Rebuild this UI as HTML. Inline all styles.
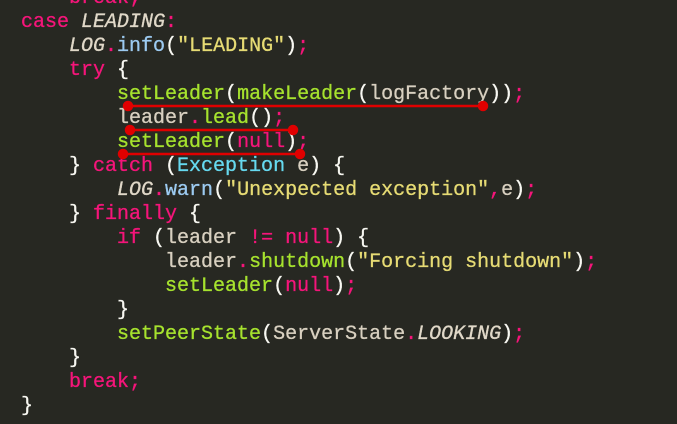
<!DOCTYPE html>
<html><head><meta charset="utf-8"><style>
html,body{margin:0;padding:0;background:#272822;width:677px;height:424px;overflow:hidden}
pre{position:absolute;left:21px;top:-13px;margin:0;font-family:"Liberation Mono",monospace;font-size:20px;line-height:24px;color:#f8f8f2;letter-spacing:0;-webkit-text-stroke:0.3px}
.k{color:#f5157a}.g{color:#a6e22e}.s{color:#e6db74}.c{color:#66d9ef}.v{color:#d8d0c0}.i{font-style:italic;color:#e0d8c8}.b{color:#9ccaf0}
svg{position:absolute;left:0;top:0}
</style></head><body>
<pre><span class="k">    break;</span>
<span class="k">case</span> <span class="i">LEADING</span><span class="k">:</span>
    <span class="i">LOG</span><span class="k">.</span><span class="b">info</span>(<span class="s">"LEADING"</span>)<span class="k">;</span>
    <span class="k">try</span> {
        <span class="g">setLeader</span>(<span class="g">makeLeader</span>(<span class="v">logFactory</span>))<span class="k">;</span>
        <span class="v">leader</span><span class="k">.</span><span class="g">lead</span>()<span class="k">;</span>
        <span class="g">setLeader</span>(<span class="k">null</span>)<span class="k">;</span>
    } <span class="k">catch</span> (<span class="c">Exception</span> <span class="v">e</span>) {
        <span class="i">LOG</span><span class="k">.</span><span class="b">warn</span>(<span class="s">"Unexpected exception"</span><span class="k">,</span><span class="v">e</span>)<span class="k">;</span>
    } <span class="k">finally</span> {
        <span class="k">if</span> (<span class="v">leader</span> <span class="k">!=</span> <span class="k">null</span>) {
            <span class="v">leader</span><span class="k">.</span><span class="g">shutdown</span>(<span class="s">"Forcing shutdown"</span>)<span class="k">;</span>
            <span class="g">setLeader</span>(<span class="k">null</span>)<span class="k">;</span>
        }
        <span class="g">setPeerState</span>(<span class="v">ServerState</span><span class="k">.</span><span class="i">LOOKING</span>)<span class="k">;</span>
    }
<span class="k">    break;</span>
}</pre>
<svg width="677" height="424">
<g stroke="#e00000" stroke-width="2.5" fill="#e00000">
<line x1="128" y1="106" x2="483" y2="106"/><circle cx="128" cy="106" r="4"/><circle cx="483" cy="106" r="4"/>
<line x1="130" y1="130" x2="293" y2="130"/><circle cx="130" cy="130" r="4"/><circle cx="293" cy="130" r="4"/>
<line x1="123" y1="154" x2="300" y2="154"/><circle cx="123" cy="154" r="4"/><circle cx="300" cy="154" r="4"/>
</g></svg>
</body></html>
